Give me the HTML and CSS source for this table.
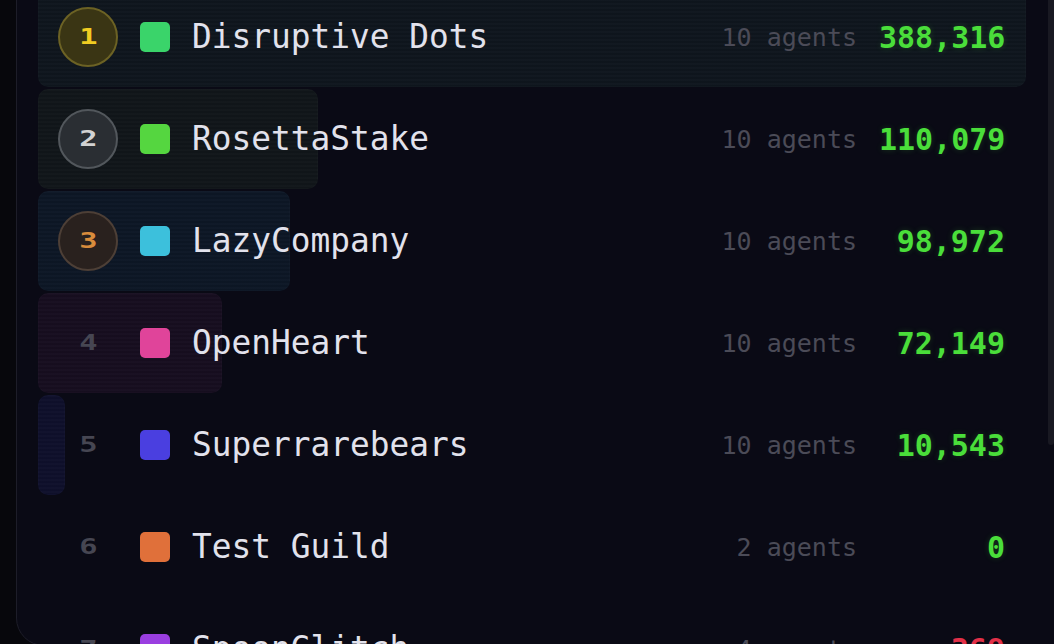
FILE: index.html
```html
<!DOCTYPE html>
<html>
<head>
<meta charset="utf-8">
<link rel="stylesheet" href="styles.css">
</head>
<body>
<div class="panel">
  <div class="list">
    <div class="row">
      <div class="bar" style="width:100%;background-color:#0f161e"></div>
      <div class="rank gold"><span>1</span></div>
      <div class="swatch" style="background:#3ad46a"></div>
      <div class="name">Disruptive Dots</div>
      <div class="agents">10 agents</div>
      <div class="score">388,316</div>
    </div>
    <div class="row">
      <div class="bar" style="width:28.35%;background-color:#11161a"></div>
      <div class="rank silver"><span>2</span></div>
      <div class="swatch" style="background:#55d640"></div>
      <div class="name">RosettaStake</div>
      <div class="agents">10 agents</div>
      <div class="score">110,079</div>
    </div>
    <div class="row">
      <div class="bar" style="width:25.49%;background-color:#0d1726"></div>
      <div class="rank bronze"><span>3</span></div>
      <div class="swatch" style="background:#3cc0dc"></div>
      <div class="name">LazyCompany</div>
      <div class="agents">10 agents</div>
      <div class="score">98,972</div>
    </div>
    <div class="row">
      <div class="bar" style="width:18.58%;background-color:#170e20"></div>
      <div class="rank"><span>4</span></div>
      <div class="swatch" style="background:#e0449a"></div>
      <div class="name">OpenHeart</div>
      <div class="agents">10 agents</div>
      <div class="score">72,149</div>
    </div>
    <div class="row">
      <div class="bar" style="width:2.72%;background-color:#0f102c"></div>
      <div class="rank"><span>5</span></div>
      <div class="swatch" style="background:#4a3fe0"></div>
      <div class="name">Superrarebears</div>
      <div class="agents">10 agents</div>
      <div class="score">10,543</div>
    </div>
    <div class="row">
      <div class="rank"><span>6</span></div>
      <div class="swatch" style="background:#e0703a"></div>
      <div class="name">Test Guild</div>
      <div class="agents">2 agents</div>
      <div class="score">0</div>
    </div>
    <div class="row">
      <div class="rank"><span>7</span></div>
      <div class="swatch" style="background:#9a3ee0"></div>
      <div class="name">SpoonGlitch</div>
      <div class="agents">4 agents</div>
      <div class="score neg">-369</div>
    </div>
  </div>
  <div class="scrollbar"></div>
</div>
</body>
</html>
```

FILE: styles.css
```css
html, body {
  margin: 0;
  padding: 0;
  background: #07070c;
  overflow: hidden;
  height: 644px;
}

.panel {
  display: flex;
  align-items: flex-start;
  margin-left: 16px;
  margin-top: -40px;
  width: 1080px;
  height: 686px;
  border: 1px solid #1d1d29;
  border-radius: 28px;
  background: #0a0a15;
  overflow: hidden;
  box-sizing: border-box;
  padding: 26px 0 0 21px;
}

.list {
  width: 988px;
  display: flex;
  flex-direction: column;
  gap: 2px;
  flex: none;
}

.row {
  position: relative;
  height: 100px;
  display: flex;
  align-items: center;
  gap: 22px;
  padding: 0 21px 0 20px;
  font-family: "DejaVu Sans Mono", "Liberation Mono", monospace;
}

.bar {
  position: absolute;
  left: 0;
  top: 0;
  bottom: 0;
  border-radius: 10px;
  background-image: repeating-linear-gradient(to bottom, rgba(255,255,255,0.012) 0 2px, rgba(0,0,0,0.05) 2px 4px);
  box-shadow: inset 0 0 0 1px rgba(255,255,255,0.015);
}

.rank, .swatch, .name, .agents, .score {
  position: relative;
  z-index: 1;
}

.rank {
  width: 60px;
  height: 60px;
  flex: none;
  box-sizing: border-box;
  border-radius: 50%;
  display: flex;
  align-items: center;
  justify-content: center;
  color: #464652;
  font-family: "DejaVu Sans Mono", monospace;
  font-weight: bold;
  font-size: 21px;
  line-height: 1;
}

.rank span {
  display: inline-block;
  transform: scaleX(1.45);
}

.rank.gold {
  background: #3a3514;
  border: 2px solid #6c6224;
  color: #f0cc22;
}

.rank.silver {
  background: #2a2e33;
  border: 2px solid #52575c;
  color: #d2d2d2;
}

.rank.bronze {
  background: #29211e;
  border: 2px solid #4d3f36;
  color: #d88c3c;
}

.swatch {
  width: 30px;
  height: 30px;
  border-radius: 5px;
  flex: none;
}

.name {
  flex: 1;
  color: #e2e2ec;
  font-size: 32.8px;
  white-space: nowrap;
}

.agents {
  color: #4b4b57;
  font-size: 25px;
  white-space: nowrap;
}

.score {
  width: 126px;
  text-align: right;
  font-size: 30px;
  font-weight: bold;
  color: #4ade3a;
  text-shadow: 0 0 6px rgba(74, 222, 58, 0.2);
  white-space: nowrap;
}

.score.neg {
  color: #e23048;
  text-shadow: none;
}

.scrollbar {
  flex: none;
  width: 6px;
  height: 484px;
  margin-left: 22px;
  margin-top: -26px;
  background: #191922;
  border-radius: 0 0 4px 4px;
}
```
